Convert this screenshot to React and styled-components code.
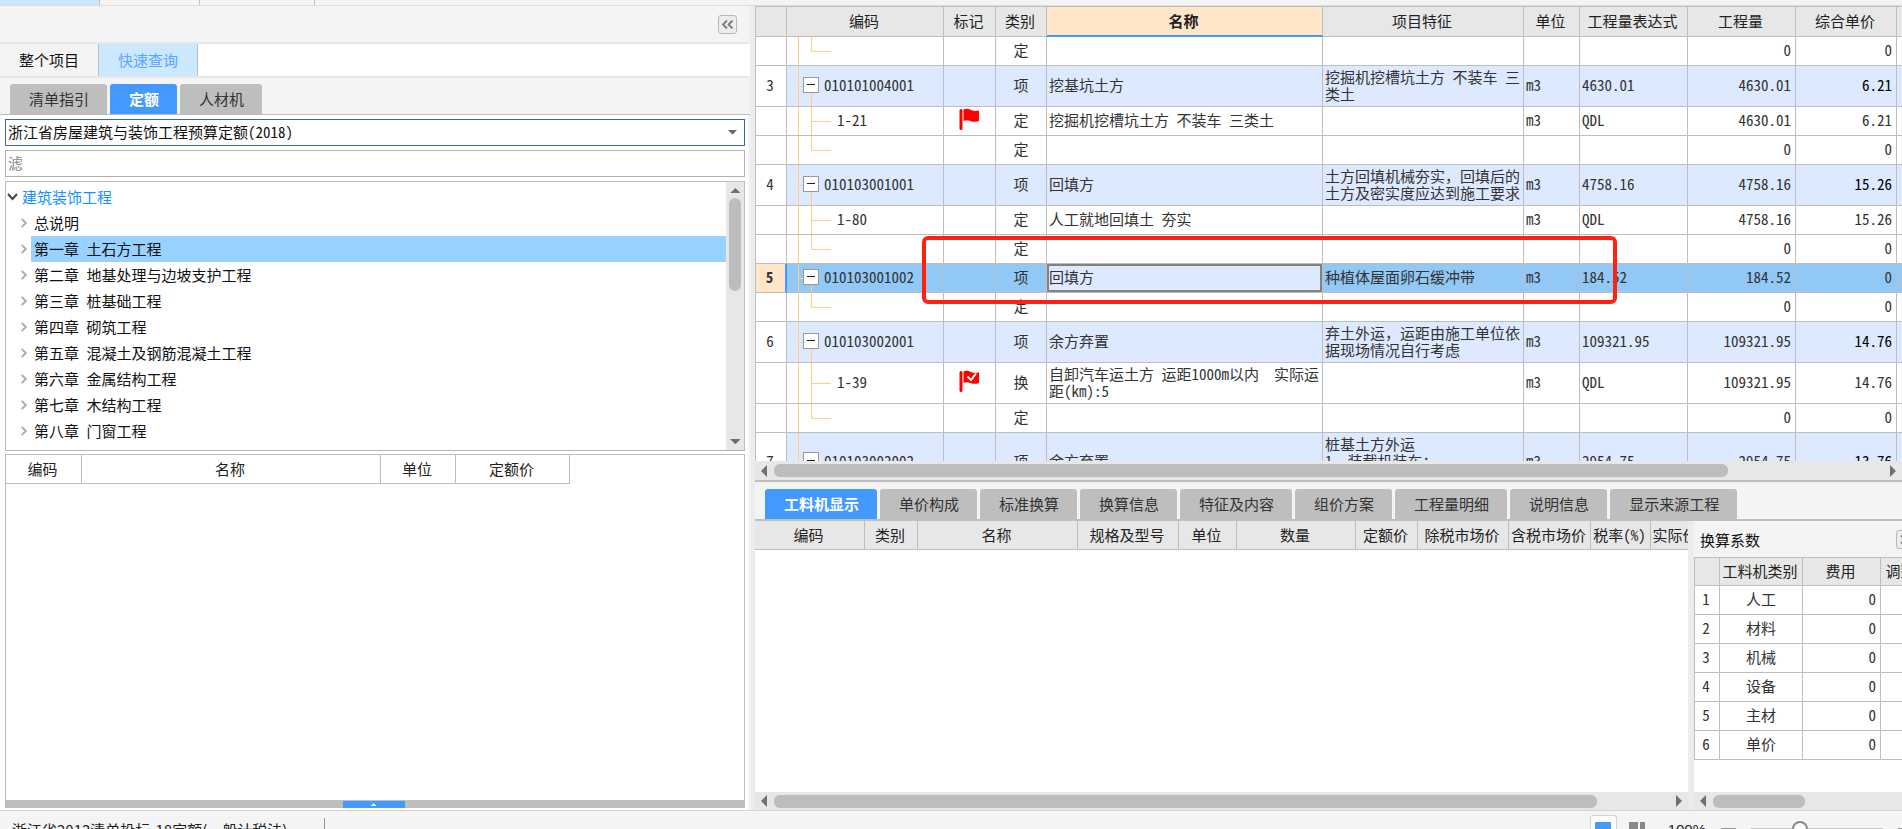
import React from 'react';
import styled, { createGlobalStyle, css } from 'styled-components';

const LINE = '#bebebe';
const BLUE = '#4499ff';
const GUIDE = '#ffcd85';
const guideFill = `linear-gradient(${GUIDE}, ${GUIDE})`;

const GlobalStyle = createGlobalStyle`
    * {
        box-sizing: border-box;
    }
    body {
        margin: 0;
        overflow: hidden;
        background: #f4f4f4;
        color: #222;
        font-family: 'Noto Sans Mono CJK SC', 'Noto Sans CJK SC', sans-serif;
        font-size: 15px;
        line-height: 17px;
    }
    button, input, select {
        font: inherit;
        color: inherit;
        border-radius: 0;
        margin: 0;
    }
`;

/* The status bar hangs partly below the window edge. */
const Page = styled.div`
    display: flex;
    flex-direction: column;
    height: calc(100vh + 21px);
`;

const TopStrip = styled.div`
    display: flex;
    flex: none;
    height: 6px;
    border-bottom: 1px solid #dedede;
`;

const TopTab = styled.div`
    width: ${props => props.$width}px;
    border-right: 1px solid ${LINE};
    background: ${props => (props.$active ? '#cce8ff' : 'transparent')};
`;

const Main = styled.main`
    display: flex;
    flex: 1;
    min-height: 0;
`;

const LeftPanel = styled.section`
    display: flex;
    flex-direction: column;
    flex: none;
    width: 750px;
`;

const PanelHead = styled.div`
    display: flex;
    flex: none;
    align-items: flex-end;
    justify-content: flex-end;
    height: 38px;
    padding: 0 13px 8px 0;
    border-bottom: 2px solid #e7e7e7;
`;

const SquareButton = styled.button`
    display: flex;
    flex: none;
    align-items: center;
    justify-content: center;
    width: 19px;
    height: 19px;
    padding: 0;
    border: 1px solid #b8b8b8;
    border-radius: 3px;
    background: #ececec;
    color: #777;
`;

const ModeTabs = styled.nav`
    display: flex;
    flex: none;
    height: 34px;
    background: #fff;
    border-bottom: 2px solid #e7e7e7;
`;

const ModeTab = styled.button`
    width: 99px;
    padding: 0 0 2px;
    border: 0;
    border-right: 1px solid ${LINE};
    font-family: 'Noto Sans CJK SC', sans-serif;
    background: ${props => (props.$active ? '#cce8ff' : '#f4f4f4')};
    color: ${props => (props.$active ? '#5aa5ff' : '#111')};
`;

const FolderTabs = styled.nav`
    display: flex;
    flex: none;
    align-items: flex-end;
    gap: 3px;
    height: ${props => props.$height}px;
    padding-left: 10px;
    border-bottom: ${props => props.$line}px solid ${LINE};
`;

const FolderTab = styled.button`
    height: 30px;
    padding: 0 18px 2px 19px;
    border: 0;
    border-radius: 3px 3px 0 0;
    font-family: 'Noto Sans CJK SC', sans-serif;
    white-space: nowrap;
    background: ${props => (props.$active ? BLUE : '#bebebe')};
    color: ${props => (props.$active ? '#fff' : '#333')};
    font-weight: ${props => (props.$active ? 700 : 400)};
`;

const LeftBody = styled.div`
    display: flex;
    flex-direction: column;
    flex: 1;
    min-height: 0;
    margin-right: 2px;
    padding: 4px 3px 2px 5px;
    background: #fff;
`;

const SelectWrap = styled.div`
    display: flex;
    flex: none;
    align-items: center;
    height: 27px;
    margin-bottom: 4px;
    padding-right: 7px;
    border: 1px solid #3e62a5;
    color: #666;
`;

const LibrarySelect = styled.select`
    flex: 1;
    height: 25px;
    padding: 0 2px 2px;
    border: 0;
    outline: 0;
    appearance: none;
    background: transparent;
    color: #111;
`;

const FilterInput = styled.input`
    flex: none;
    height: 27px;
    margin-bottom: 4px;
    padding: 0 2px 2px;
    border: 1px solid #b2b2b2;
    &::placeholder {
        color: #888;
        opacity: 1;
    }
`;

const TreeBox = styled.div`
    display: flex;
    flex: none;
    height: 270px;
    border: 1px solid ${LINE};
    border-bottom-color: #b2b2b2;
`;

const Tree = styled.ul`
    flex: 1;
    margin: 0;
    padding: 2px 0 0;
    list-style: none;
`;

const TreeItem = styled.li`
    display: flex;
    align-items: center;
    gap: ${props => (props.$root ? 3 : 2)}px;
    height: 26px;
    padding-left: ${props => (props.$root ? 0 : 12)}px;
    color: ${props => (props.$root ? '#1492ff' : '#111')};
    svg {
        flex: none;
        color: ${props => (props.$root ? '#444' : '#aaa')};
    }
`;

const TreeLabel = styled.span`
    display: flex;
    flex: 1;
    align-items: center;
    align-self: stretch;
    padding: 0 0 1px ${props => (props.$root ? 0 : 3)}px;
    white-space: pre;
    background: ${props => (props.$active ? '#99d1ff' : 'transparent')};
`;

const VerticalBar = styled.div`
    display: flex;
    flex-direction: column;
    align-items: center;
    width: 18px;
    padding: 6px 0;
    background: #e7e7e7;
    color: #6f6f78;
`;

const VerticalThumb = styled.div`
    width: 12px;
    height: 93px;
    margin: 5px 0 auto;
    border-radius: 6px;
    background: #bdbdbd;
`;

const HorizontalBar = styled.div`
    display: flex;
    flex: none;
    align-items: center;
    gap: 7px;
    height: ${props => props.$height}px;
    padding: 0 6px;
    background: #e7e7e7;
    color: #6f6f78;
    svg {
        flex: none;
    }
`;

const Track = styled.div`
    flex: 1;
`;

const HorizontalThumb = styled.div`
    width: ${props => props.$size};
    height: 13px;
    border-radius: 6px;
    background: #bdbdbd;
`;

const QuotaBox = styled.div`
    flex: 1;
    margin-top: 3px;
    border: 1px solid ${LINE};
    border-bottom: 0;
`;

const Table = styled.table`
    width: ${props => props.$width || '100%'};
    border-collapse: separate;
    border-spacing: 0;
    table-layout: fixed;
`;

const HeadCell = styled.th`
    height: ${props => props.$height || 29}px;
    padding: 0 2px 2px 0;
    border-right: 1px solid ${LINE};
    border-bottom: 1px solid ${LINE};
    background: ${props => (props.$plain ? '#fff' : '#e7e7e7')};
    font-weight: 400;
    white-space: nowrap;
    overflow: hidden;
    ${props =>
        props.$current &&
        css`
            border-bottom: 2px solid ${BLUE};
            background: #ffe6c8;
            font-weight: 700;
        `}
`;

const rowFill = { item: '#dde9fe', selected: '#91c8f6' };

const Cell = styled.td`
    height: ${props => props.$height || 29}px;
    padding: 0 ${props => (props.$align === 'right' ? 4 : 2)}px 3px;
    border-right: 1px solid ${LINE};
    border-bottom: 1px solid ${LINE};
    background-color: ${props => rowFill[props.$kind] || '#fff'};
    text-align: ${props => props.$align || 'left'};
    white-space: pre-line;
    color: ${props => (props.$strong ? '#000' : '#333')};
    ${props =>
        props.$editing &&
        css`
            background-color: #dde9fe;
            box-shadow: inset 0 0 0 2px #828282;
        `}
    svg {
        display: block;
        margin: 0 auto;
    }
`;

const NumberCell = styled(Cell)`
    padding-right: 4px;
    text-align: center;
    background-color: #fff;
    ${props =>
        props.$kind === 'selected' &&
        css`
            border-right: 2px solid ${BLUE};
            background-color: #ffe6c8;
            font-weight: 700;
        `}
`;

/* Branch lines of the code column: trunk, stub to the box, and child line. */
const branches = {
    parent: css`
        background-image: ${guideFill}, ${guideFill}, ${guideFill};
        background-position: 11px 0, 11px 50%, 24px 100%;
        background-size: 1px 100%, 6px 1px, 1px 50%;
    `,
    middle: css`
        background-image: ${guideFill}, ${guideFill}, ${guideFill};
        background-position: 11px 0, 24px 0, 24px 50%;
        background-size: 1px 100%, 1px 100%, 20px 1px;
    `,
    last: css`
        background-image: ${guideFill}, ${guideFill}, ${guideFill};
        background-position: 11px 0, 24px 0, 24px 50%;
        background-size: 1px 100%, 1px 50%, 20px 1px;
    `,
};

const CodeCell = styled(Cell)`
    padding-left: ${props => (props.$branch === 'parent' ? 16 : 50)}px;
    background-repeat: no-repeat;
    ${props => branches[props.$branch]}
`;

const CodeLine = styled.div`
    display: flex;
    align-items: center;
    gap: 5px;
`;

const Toggle = styled.button`
    display: flex;
    align-items: center;
    justify-content: center;
    width: 16px;
    height: 16px;
    padding: 0;
    border: 1px solid #999;
    background: #fff;
    &::before {
        content: '';
        width: 8px;
        height: 1px;
        background: #222;
    }
`;

const BottomHandle = styled.div`
    display: flex;
    flex: none;
    justify-content: center;
    height: 8px;
    padding-right: 2px;
    background: #bebebe;
`;

const HandleButton = styled.button`
    display: flex;
    align-items: center;
    justify-content: center;
    width: 62px;
    height: 7px;
    padding: 0;
    border: 0;
    margin-top: 1px;
    background: ${BLUE};
    color: #fff;
`;

const Splitter = styled.div`
    flex: none;
    width: ${props => props.$width}px;
    background: #ececec;
`;

const RightPanel = styled.section`
    display: flex;
    flex-direction: column;
    flex: 1;
    min-width: 0;
`;

const BillGrid = styled.div`
    position: relative;
    flex: none;
    height: 455px;
    overflow: hidden;
    border-top: 1px solid ${LINE};
    border-left: 1px solid ${LINE};
    background: #fff;
`;

const Highlight = styled.div`
    position: absolute;
    top: 229px;
    left: 166px;
    width: 695px;
    height: 68px;
    border: 4px solid #ff2113;
    border-radius: 6px;
    pointer-events: none;
`;

const BarLine = styled.div`
    flex: none;
    height: 2px;
    background: ${LINE};
`;

const Detail = styled.div`
    display: flex;
    flex: 1;
    min-height: 0;
`;

const ResourcePane = styled.div`
    display: flex;
    flex-direction: column;
    flex: 1;
    min-width: 0;
    overflow: hidden;
    background: #fff;
`;

const FactorPane = styled(ResourcePane)`
    flex: none;
    width: 208px;
`;

const FactorHead = styled.div`
    display: flex;
    flex: none;
    align-items: center;
    justify-content: space-between;
    width: 222px;
    height: 36px;
    padding: 0 1px 0 6px;
    background: #f4f4f4;
    color: #111;
`;

const Fill = styled.div`
    flex: 1;
`;

const FactorTable = styled(Table)`
    border-top: 1px solid ${LINE};
    border-left: 1px solid ${LINE};
`;

const StatusBar = styled.footer`
    display: flex;
    flex: none;
    align-items: center;
    height: 40px;
    padding-bottom: 3px;
    border-top: 1px solid #d6d6d6;
    font-family: 'Noto Sans CJK SC', sans-serif;
    color: #222;
`;

const StatusText = styled.div`
    display: flex;
    align-items: center;
    width: 325px;
    height: 22px;
    margin-right: auto;
    padding-left: 12px;
    border-right: 1px solid #8b95a3;
`;

const ViewButton = styled.button`
    display: flex;
    align-items: center;
    justify-content: center;
    width: 27px;
    height: 28px;
    margin-right: 7px;
    padding: 0;
    border: 1px solid ${props => (props.$active ? '#d2d2d2' : 'transparent')};
    border-radius: 3px;
    background: ${props => (props.$active ? '#fff' : 'transparent')};
`;

const Zoom = styled.label`
    display: flex;
    align-items: center;
    gap: 15px;
    margin-left: 10px;
    font-family: 'Liberation Sans', sans-serif;
`;

const Range = styled.input`
    width: 132px;
    height: 18px;
    appearance: none;
    background: linear-gradient(#c8c8c8, #c8c8c8) 0 50% / 100% 2px no-repeat;
    &::-webkit-slider-thumb {
        appearance: none;
        width: 16px;
        height: 16px;
        border: 2px solid #8a8a8a;
        border-radius: 50%;
        background: #fff;
    }
`;

const Sign = styled.span`
    width: ${props => props.$width}px;
    height: 2px;
    background: #999;
`;

const arrowPoints = {
    left: '6,0 6,12 0,6',
    right: '0,0 0,12 6,6',
    up: '0,6 12,6 6,0',
    down: '0,0 12,0 6,6',
};

const Arrow = ({ dir, size = 1 }) => {
    const sideways = dir === 'left' || dir === 'right';
    const w = sideways ? 6 : 12;
    const h = sideways ? 12 : 6;
    return (
        <svg width={w * size} height={h * size} viewBox={`0 0 ${w} ${h}`} aria-hidden="true">
            <polygon points={arrowPoints[dir]} fill="currentColor" />
        </svg>
    );
};

const Chevron = ({ open }) => (
    <svg width={open ? 13 : 11} height="12" viewBox="0 0 12 12" aria-hidden="true">
        <path d={open ? 'M1.5 3 6 8 10.5 3' : 'M4 1.5 8.5 6 4 10.5'} fill="none" stroke="currentColor" strokeWidth="2" />
    </svg>
);

const DoubleChevron = ({ right }) => (
    <svg width="13" height="9" viewBox="0 0 13 9" aria-hidden="true">
        <path
            d={right ? 'M2 .5 6 4.5 2 8.5M7 .5 11 4.5 7 8.5' : 'M6 .5 2 4.5 6 8.5M11.5 .5 7.5 4.5 11.5 8.5'}
            fill="none"
            stroke="currentColor"
            strokeWidth="1.8"
        />
    </svg>
);

const Flag = ({ checked }) => (
    <svg width="21" height="23" viewBox="0 0 21 23" aria-label="标记" role="img">
        <rect x="0.5" y="1" width="3" height="21" rx="1.5" fill="#f00" />
        <path d="M4.500 1.500C7 .2 9 .6 12 2c3 1.200 5 1 8 .4V13c-3 1-5 1.200-8 .2C9 12 7 12 4.500 13z" fill="#f00" />
        {checked && <path d="M8.5 6.5 12 10 17 3.5" fill="none" stroke="#fff" strokeWidth="2" />}
    </svg>
);

const ScrollBar = ({ height, size, openEnd }) => (
    <HorizontalBar $height={height}>
        <Arrow dir="left" />
        <Track>
            <HorizontalThumb $size={size} />
        </Track>
        {!openEnd && <Arrow dir="right" />}
    </HorizontalBar>
);

const chapters = [
    '总说明',
    '第一章 土石方工程',
    '第二章 地基处理与边坡支护工程',
    '第三章 桩基础工程',
    '第四章 砌筑工程',
    '第五章 混凝土及钢筋混凝土工程',
    '第六章 金属结构工程',
    '第七章 木结构工程',
    '第八章 门窗工程',
];

const billColumns = [
    { title: '', width: 31 },
    { title: '编码', width: 157 },
    { title: '标记', width: 52 },
    { title: '类别', width: 51 },
    { title: '名称', current: true },
    { title: '项目特征', width: 201 },
    { title: '单位', width: 56 },
    { title: '工程量表达式', width: 108 },
    { title: '工程量', width: 108 },
    { title: '综合单价', width: 101 },
    { title: '', width: 100 },
];

const blank = { branch: 'last', type: '定', qty: '0', price: '0' };

const billRows = [
    blank,
    {
        no: 3,
        kind: 'item',
        branch: 'parent',
        code: '010101004001',
        type: '项',
        name: '挖基坑土方',
        feature: '挖掘机挖槽坑土方 不装车 三类土',
        unit: 'm3',
        expr: '4630.01',
        qty: '4630.01',
        price: '6.21',
        height: 41,
    },
    { branch: 'middle', code: '1-21', flag: 'plain', type: '定', name: '挖掘机挖槽坑土方 不装车 三类土', unit: 'm3', expr: 'QDL', qty: '4630.01', price: '6.21' },
    blank,
    {
        no: 4,
        kind: 'item',
        branch: 'parent',
        code: '010103001001',
        type: '项',
        name: '回填方',
        feature: '土方回填机械夯实，回填后的土方及密实度应达到施工要求',
        unit: 'm3',
        expr: '4758.16',
        qty: '4758.16',
        price: '15.26',
        height: 41,
    },
    { branch: 'middle', code: '1-80', type: '定', name: '人工就地回填土 夯实', unit: 'm3', expr: 'QDL', qty: '4758.16', price: '15.26' },
    blank,
    {
        no: 5,
        kind: 'selected',
        branch: 'parent',
        code: '010103001002',
        type: '项',
        name: '回填方',
        feature: '种植体屋面卵石缓冲带',
        unit: 'm3',
        expr: '184.52',
        qty: '184.52',
        price: '0',
    },
    blank,
    {
        no: 6,
        kind: 'item',
        branch: 'parent',
        code: '010103002001',
        type: '项',
        name: '余方弃置',
        feature: '弃土外运，运距由施工单位依据现场情况自行考虑',
        unit: 'm3',
        expr: '109321.95',
        qty: '109321.95',
        price: '14.76',
        height: 41,
    },
    {
        branch: 'middle',
        code: '1-39',
        flag: 'checked',
        type: '换',
        name: '自卸汽车运土方 运距1000m以内\u00a0 实际运距(km):5',
        unit: 'm3',
        expr: 'QDL',
        qty: '109321.95',
        price: '14.76',
        height: 41,
    },
    blank,
    {
        no: 7,
        kind: 'item',
        branch: 'parent',
        code: '010103002002',
        type: '项',
        name: '余方弃置',
        feature: '桩基土方外运\n1、装载机装车；\n2、运距自行考虑',
        unit: 'm3',
        expr: '2954.75',
        qty: '2954.75',
        price: '13.76',
        height: 58,
    },
];

const detailTabs = ['工料机显示', '单价构成', '标准换算', '换算信息', '特征及内容', '组价方案', '工程量明细', '说明信息', '显示来源工程'];

const resourceColumns = [
    ['编码', 110],
    ['类别', 53],
    ['名称'],
    ['规格及型号', 101],
    ['单位', 58],
    ['数量', 119],
    ['定额价', 62],
    ['除税市场价', 91],
    ['含税市场价', 82],
    ['税率(%)', 60],
    ['实际价', 51],
];

const factors = ['人工', '材料', '机械', '设备', '主材', '单价'];

const BillRow = ({ row }) => {
    const { no, kind, branch, code, height } = row;
    const shared = { $kind: kind, $height: height };
    return (
        <tr>
            <NumberCell {...shared}>{no}</NumberCell>
            <CodeCell {...shared} $branch={branch}>
                <CodeLine>
                    {branch === 'parent' && <Toggle aria-label={`折叠 ${code}`} />}
                    {code}
                </CodeLine>
            </CodeCell>
            <Cell {...shared}>{row.flag && <Flag checked={row.flag === 'checked'} />}</Cell>
            <Cell {...shared} $align="center">
                {row.type}
            </Cell>
            <Cell {...shared} $editing={kind === 'selected'}>
                {row.name}
            </Cell>
            <Cell {...shared}>{row.feature}</Cell>
            <Cell {...shared}>{row.unit}</Cell>
            <Cell {...shared}>{row.expr}</Cell>
            <Cell {...shared} $align="right">
                {row.qty}
            </Cell>
            <Cell {...shared} $align="right" $strong={kind === 'item'}>
                {row.price}
            </Cell>
            <Cell {...shared} />
        </tr>
    );
};

const QueryPanel = () => (
    <LeftPanel>
        <PanelHead>
            <SquareButton aria-label="收起">
                <DoubleChevron />
            </SquareButton>
        </PanelHead>
        <ModeTabs>
            <ModeTab>整个项目</ModeTab>
            <ModeTab $active>快速查询</ModeTab>
        </ModeTabs>
        <FolderTabs $height={37} $line={1}>
            <FolderTab>清单指引</FolderTab>
            <FolderTab $active>定额</FolderTab>
            <FolderTab>人材机</FolderTab>
        </FolderTabs>
        <LeftBody>
            <SelectWrap>
                <LibrarySelect aria-label="定额库">
                    <option>浙江省房屋建筑与装饰工程预算定额(2018)</option>
                </LibrarySelect>
                <Arrow dir="down" size={0.75} />
            </SelectWrap>
            <FilterInput aria-label="过滤" placeholder="滤" />
            <TreeBox>
                <Tree>
                    <TreeItem $root>
                        <Chevron open />
                        <TreeLabel $root>建筑装饰工程</TreeLabel>
                    </TreeItem>
                    {chapters.map((chapter, i) => (
                        <TreeItem key={chapter}>
                            <Chevron />
                            <TreeLabel $active={i === 1}>{chapter}</TreeLabel>
                        </TreeItem>
                    ))}
                </Tree>
                <VerticalBar>
                    <Arrow dir="up" size={0.9} />
                    <VerticalThumb />
                    <Arrow dir="down" size={0.9} />
                </VerticalBar>
            </TreeBox>
            <QuotaBox>
                <Table $width="564px">
                    <colgroup>
                        <col width="76" />
                        <col />
                        <col width="75" />
                        <col width="114" />
                    </colgroup>
                    <thead>
                        <tr>
                            <HeadCell $plain>编码</HeadCell>
                            <HeadCell $plain>名称</HeadCell>
                            <HeadCell $plain>单位</HeadCell>
                            <HeadCell $plain>定额价</HeadCell>
                        </tr>
                    </thead>
                </Table>
            </QuotaBox>
            <BottomHandle>
                <HandleButton aria-label="展开">
                    <Arrow dir="up" size={0.6} />
                </HandleButton>
            </BottomHandle>
        </LeftBody>
    </LeftPanel>
);

const BillPanel = () => (
    <>
        <BillGrid>
            <Table $width="calc(100% + 95px)">
                <colgroup>
                    {billColumns.map((col, i) => (
                        <col key={i} width={col.width} />
                    ))}
                </colgroup>
                <thead>
                    <tr>
                        {billColumns.map((col, i) => (
                            <HeadCell key={i} $height={30} $current={col.current}>
                                {col.title}
                            </HeadCell>
                        ))}
                    </tr>
                </thead>
                <tbody>
                    {billRows.map((row, i) => (
                        <BillRow key={i} row={row} />
                    ))}
                </tbody>
            </Table>
            <Highlight />
        </BillGrid>
        <ScrollBar height={19} size="86%" />
        <BarLine />
    </>
);

const DetailPanel = () => (
    <>
        <FolderTabs $height={39} $line={2}>
            {detailTabs.map((tab, i) => (
                <FolderTab key={tab} $active={i === 0}>
                    {tab}
                </FolderTab>
            ))}
        </FolderTabs>
        <Detail>
            <ResourcePane>
                <Table $width="calc(100% + 14px)">
                    <colgroup>
                        {resourceColumns.map(([title, width]) => (
                            <col key={title} width={width} />
                        ))}
                    </colgroup>
                    <thead>
                        <tr>
                            {resourceColumns.map(([title]) => (
                                <HeadCell key={title}>{title}</HeadCell>
                            ))}
                        </tr>
                    </thead>
                </Table>
                <Fill />
                <ScrollBar height={18} size="92%" />
            </ResourcePane>
            <Splitter $width={6} />
            <FactorPane>
                <FactorHead>
                    换算系数
                    <SquareButton aria-label="展开换算系数">
                        <DoubleChevron right />
                    </SquareButton>
                </FactorHead>
                <FactorTable $width="259px">
                    <colgroup>
                        <col width="25" />
                        <col width="83" />
                        <col width="78" />
                        <col />
                    </colgroup>
                    <thead>
                        <tr>
                            <HeadCell $height={28} />
                            <HeadCell $height={28}>工料机类别</HeadCell>
                            <HeadCell $height={28}>费用</HeadCell>
                            <HeadCell $height={28}>调整系数</HeadCell>
                        </tr>
                    </thead>
                    <tbody>
                        {factors.map((name, i) => (
                            <tr key={name}>
                                <NumberCell>{i + 1}</NumberCell>
                                <Cell $align="center">{name}</Cell>
                                <Cell $align="right">0</Cell>
                                <Cell />
                            </tr>
                        ))}
                    </tbody>
                </FactorTable>
                <Fill />
                <ScrollBar height={18} size="50%" openEnd />
            </FactorPane>
        </Detail>
    </>
);

const App = () => (
    <>
        <GlobalStyle />
        <Page>
            <TopStrip>
                <TopTab $width={100} $active />
                <TopTab $width={100} />
                <TopTab $width={115} />
            </TopStrip>
            <Main>
                <QueryPanel />
                <Splitter $width={5} />
                <RightPanel>
                    <BillPanel />
                    <DetailPanel />
                </RightPanel>
            </Main>
            <StatusBar>
                <StatusText>浙江省2013清单投标-18定额(一般计税法)</StatusText>
                <ViewButton $active aria-label="单栏">
                    <svg width="16" height="16" viewBox="0 0 16 16">
                        <rect y="1" width="16" height="15" rx="1" fill={BLUE} />
                    </svg>
                </ViewButton>
                <ViewButton aria-label="多栏">
                    <svg width="16" height="16" viewBox="0 0 16 16">
                        <path d="M0 1h9v15H0zM11 1h5v7h-5zM11 10h5v6h-5z" fill="#888" />
                    </svg>
                </ViewButton>
                <Zoom>
                    100%
                    <Sign $width={15} />
                    <Range type="range" min="0" max="100" defaultValue="35" />
                    <Sign $width={4} />
                </Zoom>
            </StatusBar>
        </Page>
    </>
);

export default App;
